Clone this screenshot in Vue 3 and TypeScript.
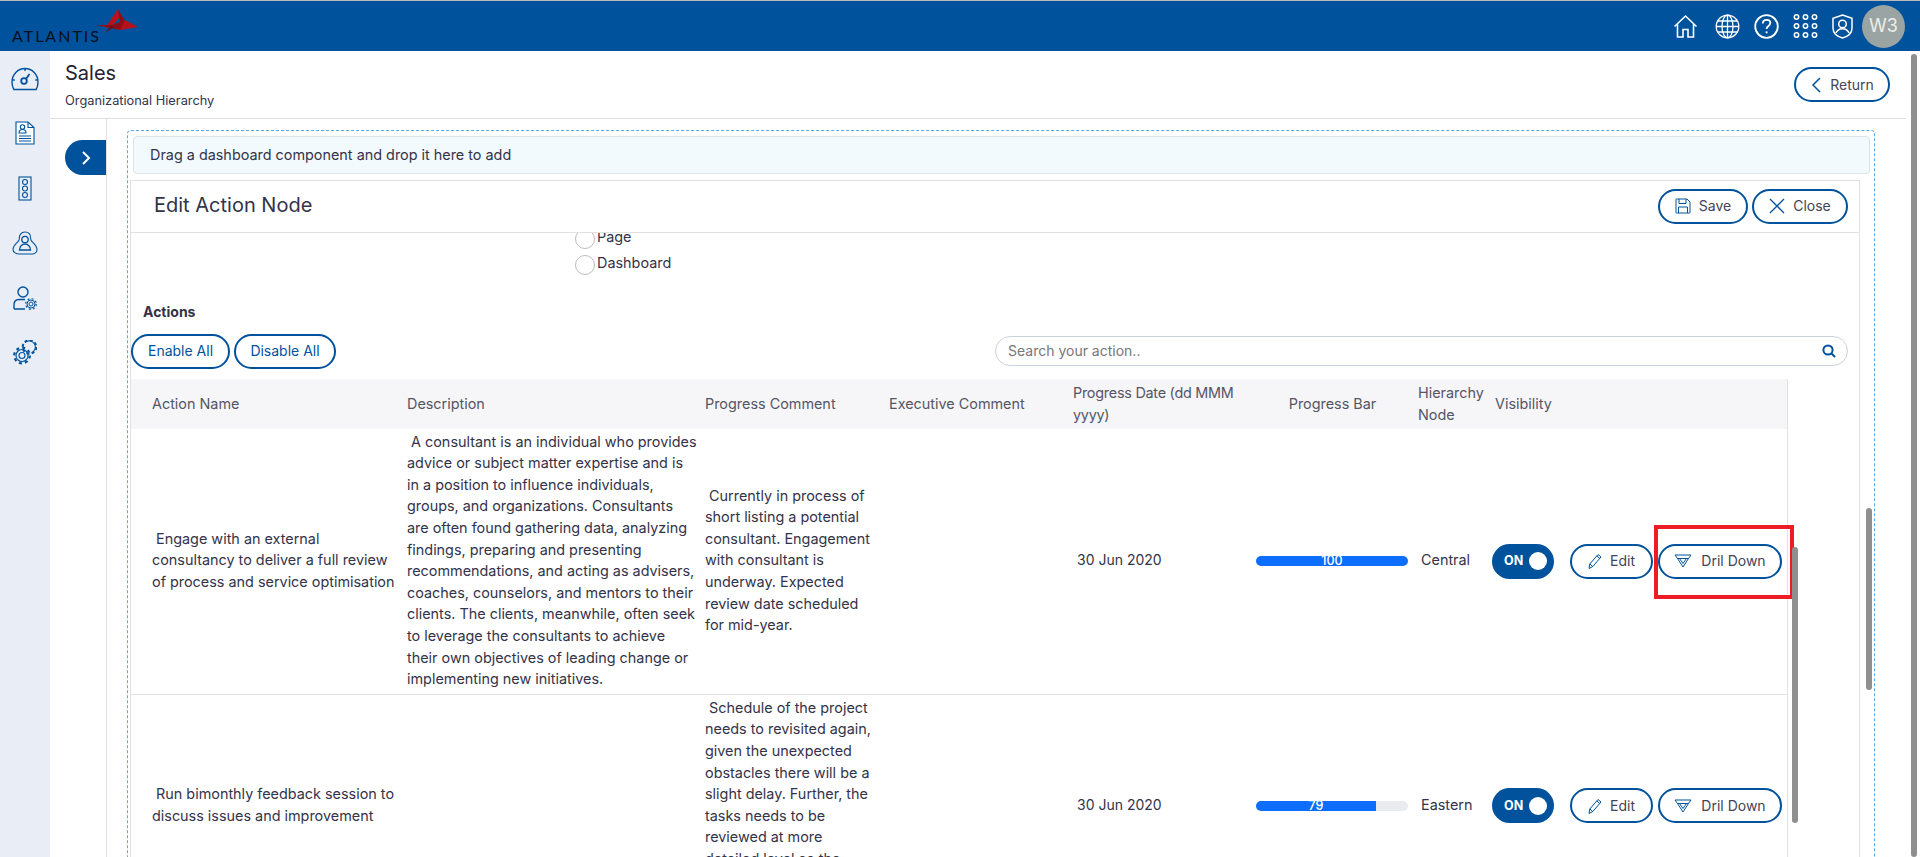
<script setup lang="ts">
interface Row {
  name: string
  desc: string
  comment: string
  date: string
  progress: number
  node: string
  mark: boolean
}
const rows: Row[] = [
  {
    name: '\u00a0Engage with an external consultancy to deliver a full review of process and service optimisation',
    desc: '\u00a0A consultant is an individual who provides advice or subject matter expertise and is in a position to influence individuals, groups, and organizations. Consultants are often found gathering data, analyzing findings, preparing and presenting recommendations, and acting as advisers, coaches, counselors, and mentors to their clients. The clients, meanwhile, often seek to leverage the consultants to achieve their own objectives of leading change or implementing new initiatives.',
    comment: '\u00a0Currently in process of short listing a potential consultant. Engagement with consultant is underway. Expected review date scheduled for mid-year.',
    date: '30 Jun 2020',
    progress: 100,
    node: 'Central',
    mark: true,
  },
  {
    name: '\u00a0Run bimonthly feedback session to discuss issues and improvement',
    desc: '',
    comment: '\u00a0Schedule of the project needs to revisited again, given the unexpected obstacles there will be a slight delay. Further, the tasks needs to be reviewed at more detailed level so the project can be completed on time.',
    date: '30 Jun 2020',
    progress: 79,
    node: 'Eastern',
    mark: false,
  },
]
</script>

<template>
  <div class="page">
    <header class="topbar">
      <div class="logo">
        <span class="logo-text">ATLANTIS</span>
        <svg class="logo-mark" viewBox="0 0 44 26" width="44" height="26">
          <polygon points="22,0 9,19 16,17 24,8" fill="#b5121c" />
          <polygon points="22,0 29,12 33,18 24,21 0,16 16,16 24,13" fill="#8e0e17" />
          <polygon points="29,11 42,18 24,21" fill="#b5121c" />
          <polygon points="16,16 9,24 18,18" fill="#6c0b12" />
        </svg>
      </div>
      <nav class="top-icons">
        <svg class="home" width="25" height="25" viewBox="0 0 25 25" fill="none" stroke="#fff" stroke-width="1.6">
          <path d="M1.500 12.500 12.500 2l11 10.500M4.500 10.500V23h5.500v-7.500h5V23h5.500V10.500" />
        </svg>
        <svg width="25" height="25" viewBox="0 0 25 25" fill="none" stroke="#fff" stroke-width="1.300">
          <circle cx="12.500" cy="12.500" r="11.300" />
          <ellipse cx="12.500" cy="12.500" rx="5.500" ry="11.300" />
          <path d="M12.500 1.200v22.600M1.200 12.500h22.600M2.700 7h19.600M2.700 18h19.600" />
        </svg>
        <svg width="25" height="25" viewBox="0 0 25 25" fill="none" stroke="#fff" stroke-width="1.800">
          <circle cx="12.500" cy="12.500" r="11.300" />
          <path d="M8.800 9.600c0-2.300 1.700-3.700 3.800-3.700 2.100 0 3.700 1.300 3.700 3.200 0 2.900-3.700 2.900-3.700 5.900" />
          <circle cx="12.600" cy="18.300" r="1.100" fill="#fff" stroke="none" />
        </svg>
        <svg width="25" height="25" viewBox="0 0 25 25" fill="none" stroke="#fff" stroke-width="1.500">
          <g v-for="y in [3, 12, 21]" :key="y">
            <circle cx="3.500" :cy="y" r="2.200" />
            <circle cx="12.500" :cy="y" r="2.200" />
            <circle cx="21.500" :cy="y" r="2.200" />
          </g>
        </svg>
        <svg width="21" height="25" viewBox="0 0 21 25" fill="none" stroke="#fff" stroke-width="1.500">
          <path d="M10.500 1 20 4.200V14c0 5-4.200 8.500-9.500 10C5.200 22.500 1 19 1 14V4.200z" />
          <circle cx="10.500" cy="10" r="3.800" />
          <path d="M4 19c1.200-3 3.500-4.300 6.500-4.300S15.800 16 17 19" />
        </svg>
        <span class="avatar">W3</span>
      </nav>
    </header>

    <div class="main">
      <aside class="sidebar">
        <svg width="28" height="24" viewBox="0 0 28 24" fill="none" stroke="#00529c" stroke-width="1.400">
          <path d="M4 22.500H2.800C1.500 20 1 18 1 15 1 7.500 6.800 1.500 14 1.500S27 7.500 27 15c0 3-.5 5-1.800 7.500H24M4 22.500h20" />
          <path d="M14 1.500v2.500M1.300 13h2.500M24.300 13h2.500" />
          <circle cx="13" cy="14" r="2.800" stroke-width="1.800" />
          <path d="m15 12 3.500-5" stroke-width="1.800" />
        </svg>
        <svg width="20" height="24" viewBox="0 0 20 24" fill="none" stroke="#00529c" stroke-width="1.100">
          <path d="M1 1h12l6 5.500V23H1z" fill="#fff" />
          <path d="M13 1v5.500h6" />
          <circle cx="7.500" cy="6" r="2.200" />
          <path d="M4 12c0-2.500 1.500-3.500 3.500-3.500S11 9.500 11 12zM4 15h12M4 17.500h12M4 20h12" />
        </svg>
        <svg width="14" height="25" viewBox="0 0 14 25" fill="none" stroke="#00529c" stroke-width="1.100">
          <rect x="1" y="1" width="12" height="23" />
          <circle cx="7" cy="6" r="2.500" />
          <circle cx="7" cy="12.500" r="2.500" />
          <circle cx="7" cy="19" r="2.500" />
        </svg>
        <svg width="26" height="24" viewBox="0 0 26 24" fill="none" stroke="#00529c" stroke-width="1.100">
          <path d="M13 1c3.800 0 5.700 3 5.700 6.500 0 1.200 0 1.500.8 2.500 2.500 2.500 5.500 5 5.500 8.500 0 3-2.500 4.500-5 4.500H7c-2.500 0-6-1.500-6-4.500 0-3.500 3-6 5.500-8.500.8-1 .8-1.300.8-2.500C7.300 4 9.200 1 13 1z" />
          <circle cx="13" cy="8.500" r="3.200" stroke-width="1.300" />
          <path d="M7.500 19c0-3.500 2.500-6 5.500-6s5.500 2.500 5.500 6z" stroke-width="1.300" />
        </svg>
        <svg width="24" height="24" viewBox="0 0 24 24" fill="none" stroke="#00529c" stroke-width="1.400">
          <circle cx="10" cy="6" r="5" />
          <path d="M1 23v-4c0-3.500 2-5.500 5-5.500h6M1 23h11" />
          <circle cx="18" cy="18" r="2" stroke-width="1" />
          <circle cx="18" cy="18" r="4" stroke-width="1" />
          <circle cx="18" cy="18" r="5.300" stroke-width="1.200" stroke-dasharray="2 2.160" />
        </svg>
        <svg width="24" height="25" viewBox="0 0 24 25" fill="none" stroke="#00529c" stroke-width="1.100">
          <circle cx="9" cy="15.500" r="3" />
          <circle cx="9" cy="15.500" r="6" />
          <circle cx="9" cy="15.500" r="7.800" stroke-width="2.200" stroke-dasharray="3 3.120" />
          <path d="M12 2.500a6.200 6.200 0 1 1 6.600 10.300" />
          <circle cx="16.500" cy="7" r="6.800" stroke-width="2" stroke-dasharray="3 2.340" />
        </svg>
      </aside>

      <div class="content">
        <div class="title-bar">
          <div class="title-text">
            <h1>Sales</h1>
            <p>Organizational Hierarchy</p>
          </div>
          <button class="btn return-btn">
            <svg width="12" height="18" viewBox="0 0 12 18" fill="none" stroke="#00529c" stroke-width="1.500"><path d="M10 2 3 9l7 7" /></svg>
            Return
          </button>
        </div>

        <div class="body">
          <div class="rail">
            <div class="tab">
              <svg width="12" height="16" viewBox="0 0 12 16" fill="none" stroke="#fff" stroke-width="2"><path d="m3 2 6 6-6 6" /></svg>
            </div>
          </div>

          <div class="canvas">
            <div class="dashed">
              <div class="drop">Drag a dashboard component and drop it here to add</div>
              <section class="panel">
                <div class="panel-head">
                  <h2>Edit Action Node</h2>
                  <div class="head-btns">
                    <button class="btn save-btn">
                      <svg width="16" height="16" viewBox="0 0 16 16" fill="none" stroke="#00529c" stroke-width="1">
                        <path d="M1.500 1h10.500l3 3v10.500a.5.5 0 0 1-.5.5h-13a.5.5 0 0 1-.5-.5V1.500a.5.5 0 0 1 .5-.5z" />
                        <path d="M4 1v4.500h7V1M3.500 15V9h9v6" />
                      </svg>
                      Save
                    </button>
                    <button class="btn close-btn">
                      <svg width="16" height="16" viewBox="0 0 16 16" fill="none" stroke="#00529c" stroke-width="1.300"><path d="m1 1 14 14M15 1 1 15" /></svg>
                      Close
                    </button>
                  </div>
                </div>

                <div class="panel-body">
                  <div class="radios">
                    <label class="radio"><span class="dot"></span><span class="radio-text">Page</span></label>
                    <label class="radio"><span class="dot"></span><span class="radio-text">Dashboard</span></label>
                  </div>
                  <h3>Actions</h3>
                  <div class="toolbar">
                    <div class="tool-btns">
                      <button class="btn link enable">Enable All</button>
                      <button class="btn link disable">Disable All</button>
                    </div>
                    <div class="search">
                      <input placeholder="Search your action.." />
                      <svg width="14" height="14" viewBox="0 0 14 14" fill="none" stroke="#00529c" stroke-width="2"><circle cx="6" cy="6" r="4.600" /><path d="m9.500 9.500 3.500 3.500" /></svg>
                    </div>
                  </div>

                  <table>
                    <colgroup>
                      <col class="c1" />
                      <col class="c2" />
                      <col class="c3" />
                      <col class="c4" />
                      <col class="c5" />
                      <col class="c6" />
                      <col class="c7" />
                      <col />
                    </colgroup>
                    <thead>
                      <tr>
                        <th class="first">Action Name</th>
                        <th>Description</th>
                        <th>Progress Comment</th>
                        <th>Executive Comment</th>
                        <th class="date-head">Progress Date (dd MMM yyyy)</th>
                        <th class="center">Progress Bar</th>
                        <th>Hierarchy Node</th>
                        <th>Visibility</th>
                      </tr>
                    </thead>
                    <tbody>
                      <tr v-for="row in rows" :key="row.name">
                        <td class="first">{{ row.name }}</td>
                        <td class="desc">{{ row.desc }}</td>
                        <td>{{ row.comment }}</td>
                        <td></td>
                        <td class="date">{{ row.date }}</td>
                        <td class="mid">
                          <div class="bar">
                            <div class="fill" :style="{ width: row.progress + '%' }">{{ row.progress }}</div>
                          </div>
                        </td>
                        <td class="node">{{ row.node }}</td>
                        <td class="mid">
                          <div class="actions">
                            <div class="toggle">ON<span class="knob"></span></div>
                            <button class="btn edit-btn">
                              <svg width="14" height="16" viewBox="0 0 14 16" fill="none" stroke="#00529c" stroke-width="1"><path d="M1 15.500l.8-4.500L10 1.500l3 2.500-8.200 9.500zM1.800 11l3 2.500M8.800 3l3 2.500" /></svg>
                              Edit
                            </button>
                            <div class="drill-wrap">
                              <button class="btn drill-btn">
                                <svg width="18" height="14" viewBox="0 0 18 14" fill="none" stroke="#00529c" stroke-width="1"><path d="M1 1h16l-2.500 3.500L9 13 3.500 4.500zM3.500 4.500h11M5.500 4.500 9 9.500l3.500-5" /></svg>
                                Dril Down
                              </button>
                              <span v-if="row.mark" class="red-box"></span>
                            </div>
                          </div>
                        </td>
                      </tr>
                    </tbody>
                  </table>
                </div>
              </section>
            </div>
          </div>
        </div>
      </div>
    </div>

    <i class="scroll page-scroll"></i>
    <i class="scroll outer-scroll"></i>
    <i class="scroll inner-scroll"></i>
  </div>
</template>

<style>
html,
body {
  margin: 0;
  overflow: hidden;
  background: #fff;
}
</style>

<style scoped>
.page {
  position: relative;
  width: 1920px;
  height: 857px;
  overflow: hidden;
  display: flex;
  flex-direction: column;
  font-family: Inter, "Liberation Sans", sans-serif;
  font-size: 14.4px;
  line-height: 21.6px;
  color: #33334a;
  background: #fff;
}
.topbar {
  flex: none;
  height: 50px;
  border-top: 1px solid #b9b9b9;
  background: #00529c;
  display: flex;
  justify-content: space-between;
  align-items: center;
}
.logo {
  position: relative;
  width: 150px;
  height: 50px;
}
.logo-text {
  position: absolute;
  left: 12px;
  top: 24px;
  font-family: Lato, sans-serif;
  font-size: 16px;
  letter-spacing: 2px;
  color: #0a0f1c;
}
.logo-mark {
  position: absolute;
  left: 96px;
  top: 8px;
}
.top-icons {
  display: flex;
  align-items: center;
  gap: 14px;
  padding-right: 15px;
}
.home {
  margin-right: 3px;
}
.avatar {
  width: 43px;
  height: 43px;
  margin-left: -5px;
  border-radius: 50%;
  background: #9aa5a3;
  color: #eceeed;
  font-size: 18px;
  display: flex;
  align-items: center;
  justify-content: center;
}
.main {
  flex: 1;
  min-height: 0;
  display: flex;
}
.sidebar {
  flex: none;
  width: 50px;
  background: #e9edf5;
  display: flex;
  flex-direction: column;
  align-items: center;
  padding-top: 16px;
  gap: 30.4px;
}
.content {
  flex: 1;
  min-width: 0;
  margin-right: 14px;
  display: flex;
  flex-direction: column;
}
.title-bar {
  flex: none;
  height: 68px;
  box-sizing: border-box;
  border-bottom: 1px solid #e0e0e0;
  padding: 0 16px 0 15px;
  display: flex;
  justify-content: space-between;
  align-items: center;
}
.title-text {
  padding-top: 2px;
}
h1 {
  margin: 0;
  font-size: 20px;
  font-weight: 400;
  line-height: 26px;
  color: #222233;
}
.title-text p {
  margin: 5px 0 0;
  font-size: 12.800px;
  line-height: 20px;
}
.btn {
  box-sizing: border-box;
  height: 35px;
  padding: 0;
  border: 2px solid #00529c;
  border-radius: 18px;
  background: #fff;
  font: inherit;
  font-size: 14px;
  color: #444455;
  display: inline-flex;
  align-items: center;
  justify-content: center;
  gap: 8px;
}
.return-btn {
  width: 96px;
}
.body {
  flex: 1;
  min-height: 0;
  display: flex;
}
.rail {
  flex: none;
  width: 57px;
  box-sizing: border-box;
  border-right: 1px solid #e0e0e0;
  padding: 21px 0 0 15px;
}
.tab {
  height: 35px;
  border-radius: 18px 0 0 18px;
  background: #00529c;
  display: flex;
  align-items: center;
  justify-content: center;
}
.canvas {
  flex: 1;
  min-width: 0;
  padding: 11px 31px 0 20px;
}
.dashed {
  height: 100%;
  box-sizing: border-box;
  border: 1px dashed #5aa9e6;
  border-bottom: 0;
  border-radius: 4px 4px 0 0;
  padding: 5px 4px 0 5px;
}
.drop {
  height: 38px;
  box-sizing: border-box;
  border: 1px solid #dde4e8;
  border-radius: 4px;
  background: #f3fafd;
  padding-left: 16px;
  line-height: 36px;
}
.panel {
  margin: 6px 10px 0 -3px;
  border: 1px solid #e2e2e2;
  border-bottom: 0;
}
.panel-head {
  height: 52px;
  box-sizing: border-box;
  border-bottom: 1px solid #e2e2e2;
  padding: 0 11px 0 23px;
  display: flex;
  justify-content: space-between;
  align-items: center;
}
h2 {
  margin: 0 0 2px;
  font-size: 20px;
  font-weight: 400;
}
.head-btns {
  display: flex;
  gap: 4px;
  margin-top: -1px;
}
.save-btn {
  width: 90px;
}
.close-btn {
  width: 96px;
}
.panel-body {
  height: 640px;
  overflow: hidden;
}
.radios {
  margin: -4px 0 0 444px;
}
.radio {
  height: 26px;
  display: flex;
  gap: 2px;
}
.radio-text {
  margin-top: -3px;
}
.dot {
  box-sizing: border-box;
  width: 20px;
  height: 20px;
  border: 1px solid #bcbcbc;
  border-radius: 50%;
}
h3 {
  margin: 20px 0 0 12px;
  font-size: 14px;
  font-weight: 700;
}
.toolbar {
  margin-top: 11px;
  padding-right: 11px;
  display: flex;
  justify-content: space-between;
  align-items: center;
}
.tool-btns {
  display: flex;
  gap: 4px;
}
.link {
  color: #00529c;
}
.enable {
  width: 99px;
}
.disable {
  width: 102px;
}
.search {
  width: 853px;
  height: 30px;
  box-sizing: border-box;
  border: 1px solid #ccd2dc;
  border-radius: 15px;
  padding: 0 11px 0 12px;
  display: flex;
  align-items: center;
}
.search input {
  flex: 1;
  border: 0;
  outline: 0;
  padding: 0;
  font: inherit;
  font-size: 14px;
  background: transparent;
}
.search input::placeholder {
  color: #777;
  opacity: 1;
}
table {
  width: 1657px;
  margin-top: 10px;
  border-collapse: collapse;
  table-layout: fixed;
  border-right: 1px solid #e2e2e2;
}
.c1 {
  width: 269px;
}
.c2 {
  width: 298px;
}
.c3,
.c4 {
  width: 184px;
}
.c5 {
  width: 181px;
}
.c6 {
  width: 164px;
}
.c7 {
  width: 77px;
}
th {
  height: 50px;
  padding: 0 7px;
  background: #f6f6f8;
  font-weight: 400;
  text-align: left;
  color: #555566;
}
td {
  padding: 2px 7px 4px;
  border-bottom: 1px solid #e2e2e2;
}
th.first,
td.first {
  padding-left: 21px;
  padding-right: 0;
}
td.desc {
  padding-right: 0;
}
th.center {
  padding-left: 14px;
  text-align: center;
}
th.date-head {
  padding-right: 0;
  letter-spacing: -0.25px;
}
td.date {
  padding-left: 11px;
  font-size: 14px;
}
td.node {
  padding-left: 10px;
}
td.mid {
  padding: 3px 7px;
}
.bar {
  width: 152px;
  height: 10px;
  margin-left: 2px;
  border-radius: 5px;
  background: #e9ecef;
  overflow: hidden;
}
.fill {
  height: 100%;
  background: #0d6efd;
  color: #fff;
  font-size: 12.500px;
  font-weight: 500;
  line-height: 10px;
  text-align: center;
}
.actions {
  display: flex;
  align-items: center;
  margin-left: -3px;
  width: 292px;
}
.toggle {
  box-sizing: border-box;
  width: 62px;
  height: 35px;
  border-radius: 18px;
  background: #00529c;
  color: #fff;
  font-size: 12.500px;
  font-weight: 700;
  padding: 0 7px 0 12px;
  display: flex;
  align-items: center;
  justify-content: space-between;
}
.knob {
  width: 18px;
  height: 18px;
  border-radius: 50%;
  background: #fff;
}
.edit-btn {
  width: 83px;
  margin: 0 5px 0 16px;
}
.drill-wrap {
  position: relative;
}
.drill-btn {
  width: 124px;
  gap: 9px;
}
.red-box {
  position: absolute;
  left: -4px;
  top: -19px;
  width: 140px;
  height: 74px;
  box-sizing: border-box;
  border: 4px solid #ed1c24;
}
.scroll {
  position: absolute;
  width: 6px;
  background: #8f8f8f;
  border-radius: 3px;
}
.page-scroll {
  left: 1911px;
  top: 54px;
  bottom: 0;
}
.outer-scroll {
  left: 1866px;
  top: 508px;
  height: 182px;
}
.inner-scroll {
  left: 1792px;
  top: 547px;
  height: 276px;
}
</style>
